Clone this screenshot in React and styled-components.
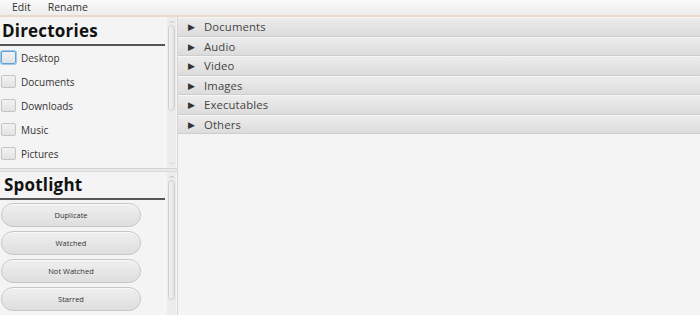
import React from "react";
import styled, { createGlobalStyle } from "styled-components";

const Global = createGlobalStyle`
  html, body { margin: 0; padding: 0; background: #f4f4f4; }
  body { font-family: "Open Sans", "DejaVu Sans", sans-serif; }
  * { box-sizing: border-box; }
`;

const Frame = styled.div`
  width: 700px;
  height: 315px;
  display: flex;
  flex-direction: column;
  overflow: hidden;
  background: #f4f4f4;
`;

const MenuBar = styled.div`
  height: 17px;
  display: flex;
  align-items: center;
  padding-left: 12px;
  gap: 17px;
  background: linear-gradient(#fafafa, #ededed);
  border-bottom: 2px solid #e7dcca;
  flex: none;
`;

const MenuItem = styled.span`
  font-size: 10.5px;
  color: #333;
  line-height: 15px;
`;

const Main = styled.div`
  flex: 1;
  display: flex;
  min-height: 0;
`;

const LeftPane = styled.div`
  width: 178px;
  flex: none;
  display: flex;
  flex-direction: column;
  border-right: 1px solid #d6d6d6;
`;

const Section = styled.div`
  height: ${(p) => p.$h}px;
  flex: none;
  display: flex;
  position: relative;
`;

const Splitter = styled.div`
  height: 4px;
  flex: none;
  background: #e9e9e9;
  border-top: 1px solid #d2d2d2;
  border-bottom: 1px solid #dadada;
`;

const SectionBody = styled.div`
  flex: 1;
  min-width: 0;
  display: flex;
  flex-direction: column;
`;

const Heading = styled.div`
  font-weight: 700;
  font-size: 17px;
  letter-spacing: 0.2px;
  color: #111;
  padding: ${(p) => p.$pad};
  line-height: 20px;
  border-bottom: 2px solid #555;
  margin-right: 2px;
`;

const CheckList = styled.div`
  display: flex;
  flex-direction: column;
  gap: 11px;
  padding: 5px 0 0 1px;
`;

const CheckRow = styled.label`
  display: flex;
  align-items: center;
  gap: 5px;
  height: 13px;
  font-size: 10px;
  color: #333;
`;

const Box = styled.span`
  width: 15px;
  height: 13px;
  border-radius: 2px;
  border: 1px solid ${(p) => (p.$focus ? "#5ca3d8" : "#c4c4c4")};
  box-shadow: ${(p) => (p.$focus ? "0 0 0 1px #9cc9ea" : "none")};
  background: linear-gradient(#f2f2f2, #e2e2e2);
`;

const ButtonList = styled.div`
  display: flex;
  flex-direction: column;
  gap: 4px;
  padding: 3px 0 0 1px;
`;

const Pill = styled.button`
  width: 140px;
  height: 24px;
  border-radius: 12px;
  border: 1px solid #c6c6c6;
  background: linear-gradient(#f0f0f0, #dedede);
  font-family: inherit;
  font-size: 7.5px;
  color: #333;
  padding: 0;
  box-shadow: inset 0 1px 0 #fafafa;
`;

const ScrollBar = styled.div`
  width: 9px;
  flex: none;
  margin-right: 1px;
  display: flex;
  flex-direction: column;
  align-items: center;
  background: #ececec;
`;

const Arrow = styled.span`
  font-size: 6px;
  line-height: 6px;
  height: 6px;
  color: #9a9a9a;
  margin: 1px 0;
`;

const Thumb = styled.div`
  width: 7px;
  height: ${(p) => p.$h}px;
  border-radius: 4px;
  border: 1px solid #cfcfcf;
  background: linear-gradient(90deg, #f2f2f2, #e3e3e3);
`;

const Spacer = styled.div`
  flex: 1;
`;

const RightPane = styled.div`
  flex: 1;
  display: flex;
  flex-direction: column;
  background: #f4f4f4;
`;

const TitleRow = styled.div`
  height: 19.5px;
  display: flex;
  align-items: center;
  padding-left: 10px;
  gap: 8px;
  background: linear-gradient(#ececec, #dcdcdc);
  border-top: 1px solid #f6f6f6;
  border-bottom: 1px solid #cdcdcd;
`;

const Tri = styled.span`
  font-size: 9px;
  line-height: 9px;
  color: #333;
  width: 8px;
`;

const TitleText = styled.span`
  font-size: 11.3px;
  letter-spacing: 0.15px;
  color: #444;
`;

const dirs = ["Desktop", "Documents", "Downloads", "Music", "Pictures"];
const spots = ["Duplicate", "Watched", "Not Watched", "Starred"];
const cats = ["Documents", "Audio", "Video", "Images", "Executables", "Others"];

export default function App() {
  return (
    <Frame>
      <Global />
      <MenuBar>
        <MenuItem>Edit</MenuItem>
        <MenuItem>Rename</MenuItem>
      </MenuBar>
      <Main>
        <LeftPane>
          <Section $h={151}>
            <SectionBody>
              <Heading $pad="4px 0 3px 2px">Directories</Heading>
              <CheckList>
                {dirs.map((d, i) => (
                  <CheckRow key={d}>
                    <Box $focus={i === 0} />
                    {d}
                  </CheckRow>
                ))}
              </CheckList>
            </SectionBody>
            <ScrollBar>
              <Arrow>︿</Arrow>
              <Thumb $h={86} />
              <Spacer />
              <Arrow>﹀</Arrow>
            </ScrollBar>
          </Section>
          <Splitter />
          <Section $h={160}>
            <SectionBody>
              <Heading $pad="3px 0 3px 4px">Spotlight</Heading>
              <ButtonList>
                {spots.map((s) => (
                  <Pill key={s}>{s}</Pill>
                ))}
              </ButtonList>
            </SectionBody>
            <ScrollBar>
              <Arrow>︿</Arrow>
              <Thumb $h={120} />
              <Spacer />
            </ScrollBar>
          </Section>
        </LeftPane>
        <RightPane>
          {cats.map((c) => (
            <TitleRow key={c}>
              <Tri>▶</Tri>
              <TitleText>{c}</TitleText>
            </TitleRow>
          ))}
        </RightPane>
      </Main>
    </Frame>
  );
}
